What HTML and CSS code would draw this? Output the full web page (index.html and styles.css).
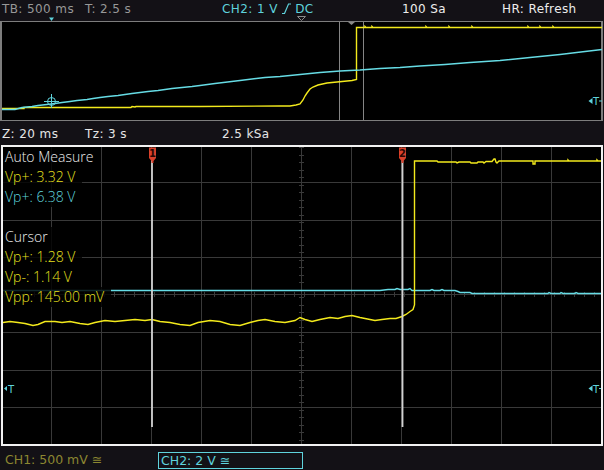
FILE: index.html
```html
<!DOCTYPE html>
<html lang="en">
<head>
  <meta charset="UTF-8">
  <title>Scope</title>
  <link rel="stylesheet" href="styles.css">
</head>
<body>
  <div class="status">
    <span class="col1">TB: 500 ms</span>
    <span class="col2">T: 2.5 s</span>
    <span class="col3 cyan">CH2: 1 V <svg class="edge" width="9" height="11" viewBox="0 0 9 11"><polyline points="0,10.5 2.5,10.5 6.5,1 9,1" /></svg> DC</span>
    <span class="col4 white">100 Sa</span>
    <span class="white">HR: Refresh</span>
  </div>

  <!-- overview of the whole record -->
  <div class="overview">
    <svg width="599" height="98" viewBox="2 22 599 98">
      <polygon class="mark-cyan" points="49,17.5 54,17.5 51.5,21" />
      <polygon class="mark-open" points="297.5,16.5 305.5,16.5 301.5,20.5" />
      <polygon class="mark-gray" points="348,22 355,22 351.5,25" />
      <line class="zoom-edge" x1="339.5" y1="22" x2="339.5" y2="120" />
      <line class="zoom-edge" x1="363.5" y1="22" x2="363.5" y2="120" />
      <polyline class="ch1" points="2,108.5 24,108.5 24,107.5 131,107.5 132,106.5 135,107 136,106.5 200,106.5 280,106 290,106 296,105 300,104 303,100 305,96 307,93 310,89 313,87 318,85 327,83 337,82 347,81 352,80.5 356.5,79.5 356.5,27.5 365,27.5 365,26.5 366,27.5 372,27.5 372,26.5 373,27.5 426,27.5 426,26.5 427,27.5 449,27.5 449,26.5 450,27.5 472,27.5 472,26.5 473,27.5 528,27.5 528,26.5 529,27.5 540,27.5 540,26.5 541,27.5 553,27.5 553,26.5 554,27.5 602,27.5" />
      <polyline class="ch2" points="2,109.5 15,109.5 22,107.5 32,106.5 38,105.5 47,104.5 55,103.5 62,102.5 70,101.5 77,100.5 87,99.5 93,98.5 100,97.5 108,96.5 118,95.5 125,94.5 132,93.5 140,92.5 148,91.5 158,90.5 165,89.5 172,88.5 182,87.5 192,86.5 200,85.5 215,83.5 240,80.5 265,77.5 280,76.5 300,74.5 320,72.5 340,71 360,70 380,68.5 400,67.5 420,66 445,64.5 470,62.5 500,60.5 530,57.5 560,54.5 585,51.5 602,49.5" />
      <g class="cross">
        <circle cx="51.5" cy="101.5" r="4" />
        <line x1="44" y1="101.5" x2="59" y2="101.5" />
        <line x1="51.5" y1="94" x2="51.5" y2="108" />
      </g>
      <g class="trig-mark">
        <polygon points="588.5,101 592.5,98 592.5,104" />
        <text x="593" y="105">T</text>
        <line x1="599" y1="101" x2="602" y2="101" />
      </g>
    </svg>
  </div>

  <div class="status zoombar">
    <span class="col1">Z: 20 ms</span>
    <span class="col2">Tz: 3 s</span>
    <span>2.5 kSa</span>
  </div>

  <div class="scope">
    <svg class="plot" width="598" height="297" viewBox="3 147 598 297">
      <g class="grid">
        <line x1="51.5" y1="147" x2="51.5" y2="444" />
        <line x1="101.5" y1="147" x2="101.5" y2="444" />
        <line x1="151.5" y1="147" x2="151.5" y2="444" />
        <line x1="201.5" y1="147" x2="201.5" y2="444" />
        <line x1="251.5" y1="147" x2="251.5" y2="444" />
        <line x1="301.5" y1="147" x2="301.5" y2="444" />
        <line x1="351.5" y1="147" x2="351.5" y2="444" />
        <line x1="401.5" y1="147" x2="401.5" y2="444" />
        <line x1="451.5" y1="147" x2="451.5" y2="444" />
        <line x1="501.5" y1="147" x2="501.5" y2="444" />
        <line x1="551.5" y1="147" x2="551.5" y2="444" />
        <line x1="3" y1="182.5" x2="601" y2="182.5" />
        <line x1="3" y1="220.5" x2="601" y2="220.5" />
        <line x1="3" y1="257.5" x2="601" y2="257.5" />
        <line x1="3" y1="294.5" x2="601" y2="294.5" />
        <line x1="3" y1="332.5" x2="601" y2="332.5" />
        <line x1="3" y1="370.5" x2="601" y2="370.5" />
        <line x1="3" y1="407.5" x2="601" y2="407.5" />
        <!-- minor ticks on the centre axes -->
        <line class="ticks-h" x1="3.5" y1="294.5" x2="601" y2="294.5" />
        <line class="ticks-v" x1="301.5" y1="147" x2="301.5" y2="444" />
      </g>

      <polyline class="ch2" points="3,290.5 380,290.5 388,289.5 395,289.5 397,288.5 400,289.5 408,289.5 410,288.5 412,290.5 430,290.5 432,289.5 434,290.5 440,290.5 442,289.5 444,290.5 455,290.5 458,291.5 460,292.5 470,292.5 472,293.5 548,293.5 549,292.5 551,293.5 560,293.5 561,292.5 563,293.5 575,293.5 576,292.5 578,293.5 601,293.5" />
      <polyline class="ch1" points="3,322.5 10,321.5 18,322.5 25,323.5 33,325.5 38,324.5 45,321.5 55,321.5 62,322.5 70,321.5 80,323.5 88,324.5 95,322.5 105,320.5 115,321.5 125,320.5 135,319.5 145,320.5 152,319.5 160,321.5 170,322.5 180,324.5 190,325.5 198,322.5 210,320.5 220,321.5 230,324.5 240,325.5 250,322.5 258,320.5 265,319.5 275,321.5 285,322.5 295,320.5 300,317.5 305,319.5 312,321.5 320,319.5 330,317.5 338,318.5 345,316.5 352,315.5 360,317.5 370,319.5 375,320.5 382,319.5 390,318.5 396,318.5 402,316.5 406,314.5 410,311.5 413,309.5 414.5,305 414.5,161 437,161 438,162 456,162 457,163 459,162 470,162 471,163 477,163 478,162 483,162 484,163 486,161.5 492,161.5 494,159 495,159 496,162 497,163 499,161 533,161 533,164 535,164 535,161 568,161 568,160 569,161 597,161 597,160 598,161 601,161" />

      <!-- time cursors -->
      <line class="cursor" x1="152" y1="160" x2="152" y2="427" />
      <line class="cursor" x1="402.5" y1="160" x2="402.5" y2="427" />
      <path class="flag" d="M149 147.5h7v10.5l-2.5 3v2h-2v-2l-2.5-3z" />
      <text class="flag-num" x="152.5" y="157">1</text>
      <path class="flag" d="M399 147.5h7v10.5l-2.5 3v2h-2v-2l-2.5-3z" />
      <text class="flag-num" x="402.5" y="157">2</text>

      <g class="trig-mark">
        <polygon points="4,388.5 7,386 7,391" />
        <text x="8" y="392.5">T</text>
        <polygon points="588.5,388.5 592.5,385.5 592.5,391.5" />
        <text x="593" y="392.5">T</text>
        <line x1="599" y1="388.5" x2="601" y2="388.5" />
      </g>
    </svg>

    <div class="readouts">
      <p class="white">Auto Measure</p>
      <p class="yellow">Vp+: 3.32 V</p>
      <p class="cyan">Vp+: 6.38 V</p>
      <div class="gap"></div>
      <p class="white">Cursor</p>
      <p class="yellow">Vp+: 1.28 V</p>
      <p class="yellow">Vp-: 1.14 V</p>
      <p class="yellow">Vpp: 145.00 mV</p>
    </div>
  </div>

  <div class="channels">
    <span class="ch1-label">CH1: 500 mV ≅</span>
    <span class="ch2-label">CH2: 2 V ≅</span>
  </div>
</body>
</html>
```

FILE: styles.css
```css
* {
  box-sizing: border-box;
}

body {
  margin: 0;
  width: 604px;
  height: 470px;
  overflow: hidden;
  background-color: #131116;
  font-family: "DejaVu Sans", sans-serif;
}

.white {
  color: #ededed;
}

.cyan {
  color: #5fd3dc;
}

.yellow {
  color: #e8e11f;
}

/* header rows */
.status {
  display: flex;
  height: 21px;
  padding: 1px 0 0 2px;
  font-size: 12px;
  line-height: 16px;
  letter-spacing: 0.4px;
  color: #989898;
  white-space: nowrap;
}

.col1 {
  width: 83px;
}

.col2 {
  width: 137px;
}

.col3 {
  width: 180px;
}

.col4 {
  width: 100px;
}

.edge {
  vertical-align: -1px;
}

.edge polyline {
  fill: none;
  stroke: #5fd3dc;
  stroke-width: 1.2;
}

.zoombar {
  height: 24px;
  padding-top: 5px;
  color: #e6e6e6;
}

/* overview strip */
.overview {
  width: 603px;
  height: 100px;
  border: 1px solid #7d7d7d;
  border-left-width: 2px;
  border-right-width: 2px;
  background-color: #000;
}

.overview svg,
.plot {
  display: block;
  overflow: visible;
}

.mark-cyan {
  fill: #5fd3dc;
}

.mark-open {
  fill: none;
  stroke: #8a8a8a;
  stroke-width: 1;
}

.mark-gray {
  fill: #8a8a8a;
}

.zoom-edge {
  stroke: #858585;
  stroke-width: 1;
}

.ch1,
.ch2 {
  fill: none;
  stroke-width: 1.4;
  stroke-linejoin: miter;
}

.ch1 {
  stroke: #f3ea1c;
}

.ch2 {
  stroke: #66dce5;
}

.cross circle,
.cross line {
  fill: none;
  stroke: #5fd3dc;
  stroke-width: 1;
}

.trig-mark polygon {
  fill: #5fd3dc;
}

.trig-mark line {
  stroke: #5fd3dc;
  stroke-width: 1;
}

.trig-mark text {
  fill: #5fd3dc;
  font-family: "DejaVu Sans", sans-serif;
  font-size: 10px;
}

/* main display */
.scope {
  position: relative;
  width: 602px;
  height: 301px;
  margin-left: 1px;
  border: 2px solid #f2f2f2;
  background-color: #000;
}

.grid line {
  stroke: #393939;
  stroke-width: 1;
  shape-rendering: crispEdges;
}

.grid .ticks-h {
  stroke-width: 5;
  stroke-dasharray: 1 9;
}

.grid .ticks-v {
  stroke-width: 5;
  stroke-dasharray: 1 6.5;
}

.cursor {
  stroke: #d2d2d2;
  stroke-width: 1.8;
}

.flag {
  fill: #d9412c;
}

.flag-num {
  fill: #2a0904;
  font-family: "DejaVu Sans", sans-serif;
  font-size: 10px;
  font-weight: bold;
  text-anchor: middle;
}

.readouts {
  position: absolute;
  top: 0;
  left: 0;
  font-family: "Open Sans", sans-serif;
  font-size: 14px;
  font-weight: 300;
  line-height: 20px;
}

.readouts p {
  width: fit-content;
  margin: 0;
  padding: 0 7px 0 2px;
  background-color: rgba(0, 0, 0, 0.82);
}

.gap {
  height: 20px;
}

/* channel settings */
.channels {
  display: flex;
  align-items: flex-start;
  height: 24px;
  padding: 5px 0 0 5px;
  font-size: 12.5px;
  white-space: nowrap;
}

.ch1-label {
  width: 153px;
  line-height: 17px;
  color: #8c8731;
}

.ch2-label {
  width: 145px;
  height: 17px;
  margin-top: 1px;
  padding-left: 2px;
  border: 1px solid #5fd3dc;
  line-height: 15px;
  color: #5fd3dc;
}
```
